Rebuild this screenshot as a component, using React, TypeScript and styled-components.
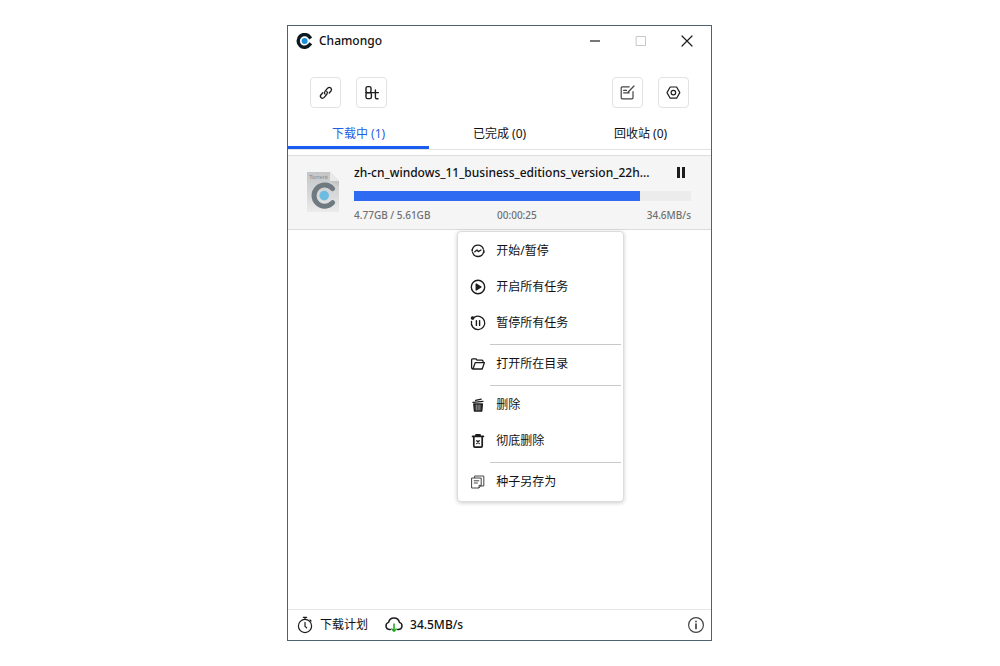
import React from "react";
import styled, { createGlobalStyle, css } from "styled-components";

const GlobalStyle = createGlobalStyle`
  *, *::before, *::after { box-sizing: border-box; }
  body {
    margin: 0;
    background: #fff;
    color: #111;
    font-family: "Noto Sans", "Noto Sans CJK SC", sans-serif;
    font-size: 12px;
    line-height: 16px;
  }
  button { font: inherit; color: inherit; background: none; border: 0; padding: 0; cursor: pointer; }
  svg { display: block; flex: none; }
`;

const Page = styled.main`
  display: flex;
  justify-content: center;
  min-height: 100vh;
  padding: 25px 17px 25px 16px;
`;

const AppWindow = styled.section`
  display: flex;
  flex-direction: column;
  width: 100%;
  max-width: 425px;
  border: 1px solid #4d6370;
  background: #fff;
`;

const TitleBar = styled.header`
  display: flex;
  align-items: center;
  height: 30px;
  padding: 0 1px 0 8px;
`;

const AppName = styled.h1`
  flex: 1;
  margin: 0 0 0 6px;
  font-size: 12px;
  font-weight: 500;
`;

const WindowButton = styled.button`
  display: grid;
  place-items: center;
  width: 46px;
  height: 30px;

  &:disabled { cursor: default; }
`;

const Toolbar = styled.div`
  display: flex;
  justify-content: space-between;
  padding: 21px 22px 10px;
`;

const ToolGroup = styled.div`
  display: flex;
  gap: 15px;
`;

const ToolButton = styled.button`
  display: grid;
  place-items: center;
  width: 31px;
  height: 31px;
  border: 1px solid #e2e2e2;
  border-radius: 4px;
`;

const Tabs = styled.div`
  display: flex;
  border-bottom: 1px solid #e2e2e2;
`;

const Tab = styled.button<{ $active?: boolean }>`
  flex: 1;
  height: 31px;
  padding-top: 4px;
  border-bottom: 3px solid transparent;
  ${(p) =>
    p.$active &&
    css`
      color: #1f5fe8;
      border-bottom-color: #1a5cf0;
    `}
`;

const TaskList = styled.div`
  flex: 1;
  padding-top: 5px;
`;

const Task = styled.article`
  position: relative;
  display: flex;
  gap: 13px;
  padding: 9px 20px 6px 19px;
  border-top: 1px solid #dedede;
  border-bottom: 1px solid #dcdcdc;
  background: #f5f5f5;
`;

const FileIcon = styled.div`
  padding-top: 7px;
`;

const TaskBody = styled.div`
  flex: 1;
  min-width: 0;
`;

const TaskHead = styled.div`
  display: flex;
  align-items: center;
  justify-content: space-between;
  gap: 12px;
`;

const FileName = styled.h2`
  margin: 0;
  font-size: 12px;
  line-height: 16px;
  font-weight: 500;
  white-space: nowrap;
`;

const PauseButton = styled.button`
  padding-right: 5px;
`;

const Track = styled.div`
  height: 10px;
  margin: 10px 0 6px;
  background: #ececec;
`;

const Fill = styled.div`
  height: 100%;
  background: #2f6bf2;
`;

const Stats = styled.div`
  display: grid;
  grid-template-columns: 143px 1fr auto;
  font-size: 10px;
  font-weight: 500;
  color: #707070;
`;

const Menu = styled.div`
  position: absolute;
  top: calc(100% + 2px);
  left: 40%;
  width: 167px;
  padding: 1px 0;
  border: 1px solid #dcdcdc;
  border-radius: 4px;
  background: #fff;
  box-shadow: 0 1px 4px rgba(0, 0, 0, 0.2);
`;

const MenuItem = styled.button`
  display: flex;
  align-items: center;
  gap: 9px;
  width: 100%;
  height: 36px;
  padding-left: 11px;
`;

const Separator = styled.hr`
  height: 1px;
  margin: 3px 2px 1px 32px;
  border: 0;
  background: #c8c8c8;
`;

const StatusBar = styled.footer`
  display: flex;
  align-items: center;
  gap: 16px;
  height: 31px;
  padding: 0 6px 0 8px;
  border-top: 1px solid #e6e6e6;
`;

const StatusButton = styled.button<{ $strong?: boolean }>`
  display: flex;
  align-items: center;
  gap: 6px;
  font-weight: ${(p) => (p.$strong ? 500 : 400)};

  &:last-child { margin-left: auto; }
`;

const Icon = ({ size = 18, sw = 1.2, children }: { size?: number; sw?: number; children: React.ReactNode }) => (
  <svg
    width={size}
    height={size}
    viewBox={`0 0 ${size} ${size}`}
    fill="none"
    stroke="#1c1c1c"
    strokeWidth={sw}
    strokeLinecap="round"
    strokeLinejoin="round"
    aria-hidden="true"
  >
    {children}
  </svg>
);

const LogoIcon = () => (
  <svg width="17" height="16" viewBox="0 0 17 16" aria-hidden="true">
    <path d="M13.8 4.2A6.4 6.4 0 1 0 13.8 11.6" fill="none" stroke="#0d1a24" strokeWidth="3.4" strokeLinecap="square" />
    <circle cx="8.6" cy="7.9" r="3" fill="#1b8fdc" />
  </svg>
);

const TorrentFile = () => (
  <svg width="34" height="41" viewBox="0 0 34 41" aria-hidden="true">
    <defs>
      <linearGradient id="paper" x1="0" y1="0" x2="0" y2="1">
        <stop offset="0" stopColor="#c4c5c7" />
        <stop offset="0.6" stopColor="#d8d9da" />
        <stop offset="1" stopColor="#ececec" />
      </linearGradient>
    </defs>
    <path d="M0 0H23L32 9V40H0Z" fill="url(#paper)" />
    <path d="M23 0L32 9H23Z" fill="#e9e9ea" />
    <path d="M23 9H32V14Z" fill="#c3c4c6" />
    <text x="2" y="7" fontSize="6" fill="#85878a" fontFamily="Liberation Sans, sans-serif">Torrent</text>
    <path d="M25.6 16.6A10.6 10.6 0 1 0 25.6 30.6" fill="none" stroke="#6f7a80" strokeWidth="5" strokeLinecap="round" />
    <circle cx="17.2" cy="23.6" r="4.8" fill="#6cbbe0" />
  </svg>
);

const menuGroups = [
  [
    {
      label: "开始/暂停",
      icon: (
        <>
          <path d="M3.4 7.4A5.7 5.7 0 0 1 14.4 7.2M3.6 10.4A5.7 5.7 0 0 0 14.6 10.2" />
          <path d="M3.2 7.4V9M14.8 8.4V10.4" strokeWidth="1.5" />
          <path d="M5.8 9.8L8 8L9.4 9.6L12 8" />
        </>
      ),
    },
    {
      label: "开启所有任务",
      icon: (
        <>
          <circle cx="9" cy="9" r="6.7" strokeWidth="1.4" />
          <path d="M7.2 6V12L12 9Z" fill="#1c1c1c" />
        </>
      ),
    },
    {
      label: "暂停所有任务",
      icon: (
        <>
          <path d="M5.2 3.4A6.7 6.7 0 1 1 2.5 7.4" />
          <circle cx="3.6" cy="4" r="1.2" fill="#1c1c1c" />
          <path d="M7.4 6.6V11.4M10.6 6.6V11.4" strokeWidth="1.4" />
        </>
      ),
    },
  ],
  [
    {
      label: "打开所在目录",
      icon: (
        <path d="M4 14H13.2L15.4 7.6H6.2L4 14Q2.6 14 2.6 12.6V4.8Q2.6 3.8 3.6 3.8H6.8L8.2 5.2H13Q14 5.2 14 6.2V7.4" />
      ),
    },
  ],
  [
    {
      label: "删除",
      icon: (
        <>
          <path d="M4.8 8H13.4L12.8 15H5.4Z" fill="#3a3a3a" />
          <path d="M7.4 9V14M9.1 9V14M10.8 9V14" stroke="#aaa" strokeWidth="0.7" />
          <path d="M4 6.4L14 5.4M6.6 4.4L12.2 3.2" />
        </>
      ),
    },
    {
      label: "彻底删除",
      icon: (
        <>
          <path d="M3.6 4.4H14.4M7 3H11" strokeWidth="1.8" />
          <path d="M4.8 5.4V14Q4.8 15.2 6 15.2H12Q13.2 15.2 13.2 14V5.4" strokeWidth="1.7" />
          <path d="M7.8 8.8L10.2 11.4M10.2 8.8L7.8 11.4" strokeWidth="1.4" />
        </>
      ),
    },
  ],
  [
    {
      label: "种子另存为",
      icon: (
        <g stroke="#444" strokeWidth="1">
          <path d="M5.6 4.6V3H14.8V13H12.4" />
          <path d="M3 5H12.2V12.4L10 15H3Z" />
          <path d="M5.2 7.8H9.8M5.2 10H8.4M10 14.6V12.4H12" />
        </g>
      ),
    },
  ],
];

const progress = 85;

export default function App() {
  return (
    <>
      <GlobalStyle />
      <Page>
        <AppWindow>
          <TitleBar>
            <LogoIcon />
            <AppName>Chamongo</AppName>
            <WindowButton aria-label="Minimize">
              <Icon size={12}><path d="M1 6H11" strokeLinecap="butt" /></Icon>
            </WindowButton>
            <WindowButton aria-label="Maximize" disabled>
              <Icon size={12} sw={1}><rect x="1.5" y="1.5" width="9" height="9" stroke="#c8c8c8" /></Icon>
            </WindowButton>
            <WindowButton aria-label="Close">
              <Icon size={12}><path d="M1 1L11 11M11 1L1 11" /></Icon>
            </WindowButton>
          </TitleBar>

          <Toolbar>
            <ToolGroup>
              <ToolButton aria-label="Add link">
                <Icon sw={1.3}>
                  <path d="M8 10.2Q6.8 8.8 8 7.4L10.6 4.2Q12.2 2.6 13.8 4Q15.2 5.4 14 7L12.2 9" />
                  <path d="M9.8 7.4Q11 8.8 9.8 10.4L7.2 13.4Q5.6 15 4.2 13.8Q2.6 12.4 4 10.8L5.8 8.8" />
                </Icon>
              </ToolButton>
              <ToolButton aria-label="Add torrent">
                <Icon sw={1.4}>
                  <rect x="3" y="2.6" width="5" height="6" rx="1.6" />
                  <rect x="3" y="8.6" width="5.4" height="6" rx="1.6" />
                  <path d="M2.6 8.6H15.4M12.4 6V13.2Q12.4 14.8 13.8 14.8H15" />
                </Icon>
              </ToolButton>
            </ToolGroup>
            <ToolGroup>
              <ToolButton aria-label="Edit tasks">
                <Icon>
                  <g stroke="#444">
                    <path d="M10.2 2.8H3.2Q2.2 2.8 2.2 3.8V13.8Q2.2 14.8 3.2 14.8H13Q14 14.8 14 13.8V7.6" />
                    <path d="M15 2L9.2 8M4.6 6.4H7.6M4.6 8.8H10.2" />
                  </g>
                </Icon>
              </ToolButton>
              <ToolButton aria-label="Settings">
                <Icon>
                  <path d="M5.2 3H11.6L14.8 8.6L11.6 14.2H5.2L2 8.6Z" />
                  <circle cx="8.4" cy="8.6" r="2.3" />
                </Icon>
              </ToolButton>
            </ToolGroup>
          </Toolbar>

          <Tabs role="tablist">
            <Tab role="tab" aria-selected="true" $active>下载中 (1)</Tab>
            <Tab role="tab" aria-selected="false">已完成 (0)</Tab>
            <Tab role="tab" aria-selected="false">回收站 (0)</Tab>
          </Tabs>

          <TaskList>
            <Task>
              <FileIcon><TorrentFile /></FileIcon>
              <TaskBody>
                <TaskHead>
                  <FileName>zh-cn_windows_11_business_editions_version_22h...</FileName>
                  <PauseButton aria-label="Pause">
                    <svg width="10" height="12" viewBox="0 0 10 12" fill="#1c1c1c" aria-hidden="true">
                      <rect x="1" y="0" width="3" height="11" />
                      <rect x="6" y="0" width="3" height="11" />
                    </svg>
                  </PauseButton>
                </TaskHead>
                <Track role="progressbar" aria-label="Download progress" aria-valuenow={progress} aria-valuemin={0} aria-valuemax={100}>
                  <Fill style={{ width: `${progress}%` }} />
                </Track>
                <Stats>
                  <span>4.77GB / 5.61GB</span>
                  <span>00:00:25</span>
                  <span>34.6MB/s</span>
                </Stats>
              </TaskBody>

              <Menu role="menu">
                {menuGroups.map((group, i) => (
                  <React.Fragment key={i}>
                    {i > 0 && <Separator />}
                    {group.map((item) => (
                      <MenuItem key={item.label} role="menuitem">
                        <Icon sw={1.3}>{item.icon}</Icon>
                        {item.label}
                      </MenuItem>
                    ))}
                  </React.Fragment>
                ))}
              </Menu>
            </Task>
          </TaskList>

          <StatusBar>
            <StatusButton>
              <Icon>
                <circle cx="9" cy="10" r="6.6" />
                <path d="M7.4 1.4H10.6M9 1.6V3.2M9 6.4V10.4L10.6 11.8M14 4L15 5" />
              </Icon>
              下载计划
            </StatusButton>
            <StatusButton $strong>
              <Icon size={20} sw={1.5}>
                <path d="M6.4 14.6H5.2A3.7 3.7 0 0 1 4.6 7.4A5.5 5.5 0 0 1 15.4 7.4A3.7 3.7 0 0 1 14.8 14.6H13.6" />
                <path d="M10 9V16M7.8 14L10 16.2L12.2 14" stroke="#1ca51c" />
              </Icon>
              34.5MB/s
            </StatusButton>
            <StatusButton aria-label="About">
              <Icon>
                <g stroke="#444">
                  <circle cx="9" cy="9" r="7.4" />
                  <path d="M9 8V12.6M9 5.4V5.6" strokeWidth="1.7" />
                </g>
              </Icon>
            </StatusButton>
          </StatusBar>
        </AppWindow>
      </Page>
    </>
  );
}
